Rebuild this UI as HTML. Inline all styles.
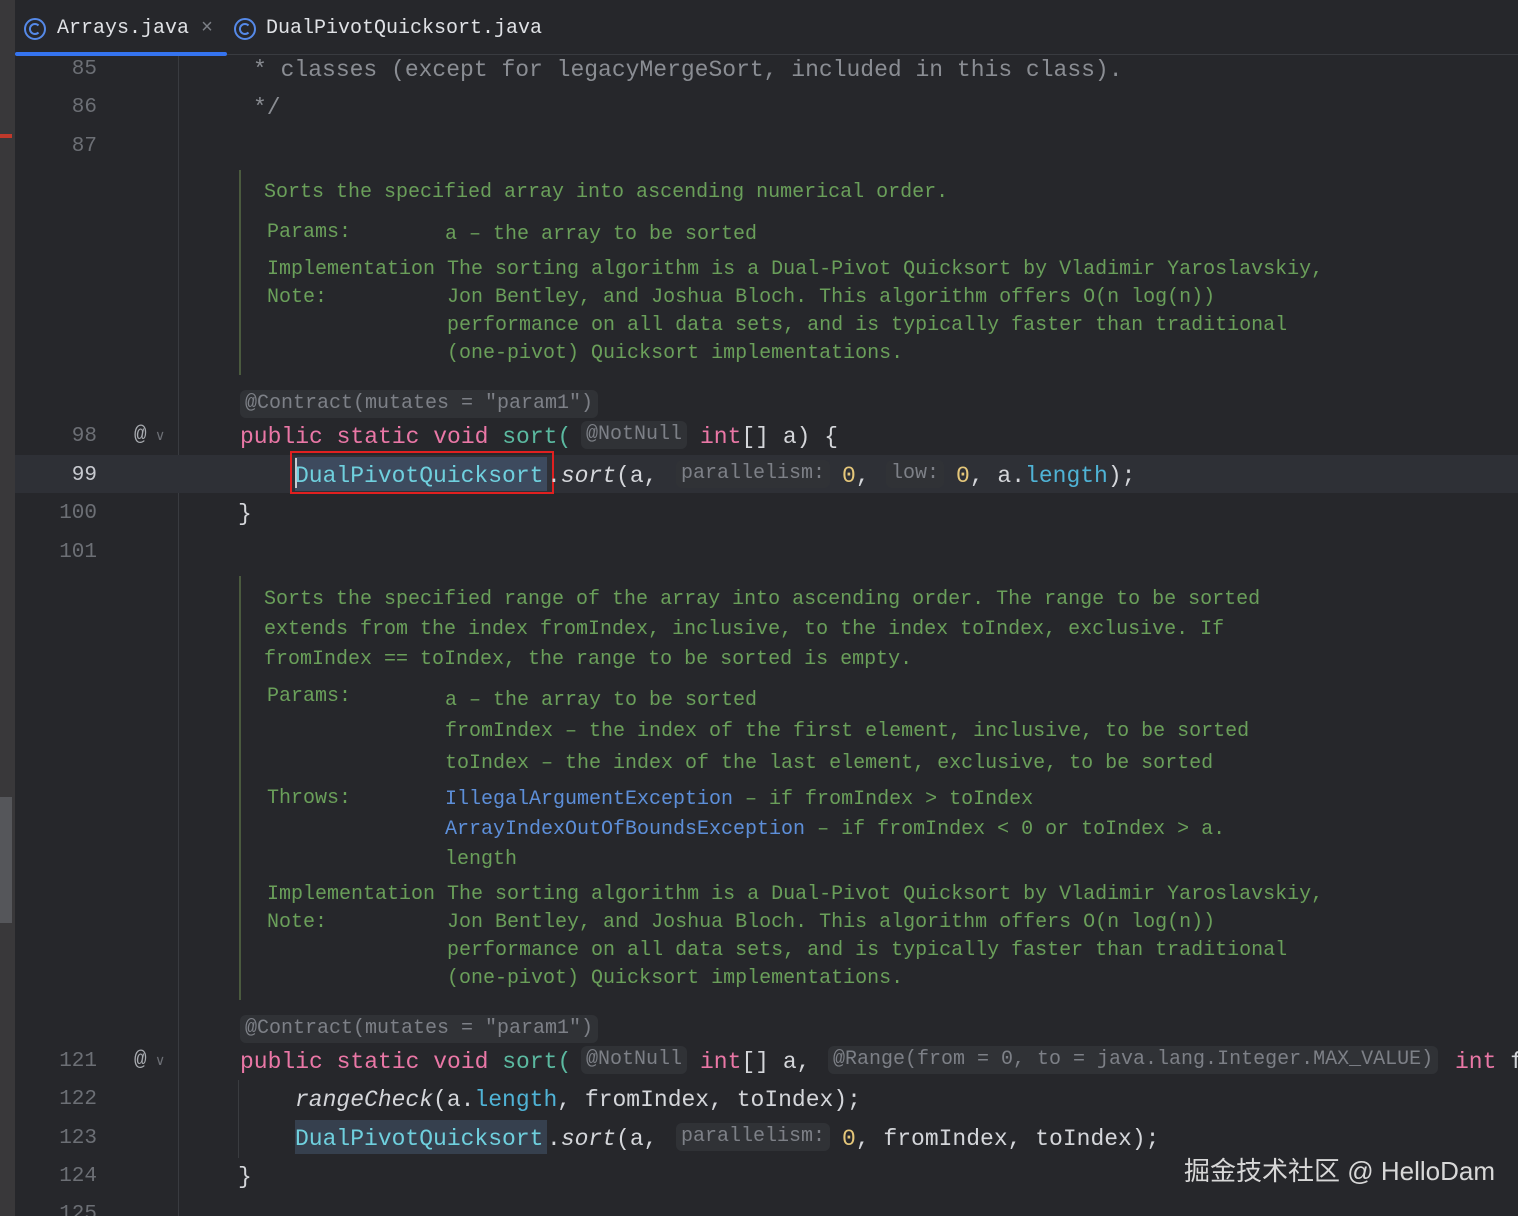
<!DOCTYPE html>
<html><head><meta charset="utf-8"><style>
*{margin:0;padding:0;box-sizing:border-box}
html,body{width:1518px;height:1216px;overflow:hidden}
body{background:#26272b;position:relative;font-family:"Liberation Mono",monospace;color:#d4d6da}
.a{position:absolute;white-space:pre}
.c{font-size:23px;line-height:38px;height:38px;transform:translateY(2px)}
.d{font-size:20px;line-height:28px;color:#6a9f5a;transform:translateY(2px)}
.n{font-size:21px;line-height:38px;color:#6c6f75;width:80px;text-align:right;transform:translateY(2px)}
.h{font-size:20px;line-height:28px;color:#7d8087;background:#303236;border-radius:6px;padding:0 5px}
.k{color:#ea77a6}.m{color:#5bb9a0}.cl{color:#6fd0de}.num{color:#e5c77a}.f{color:#4fb3d6}.l{color:#5d8fd9}.g{color:#8a8d93}
</style></head><body>
<div class="a" style="left:0;top:0;width:15px;height:1216px;background:#39383a"></div>
<div class="a" style="left:0;top:134px;width:12px;height:4px;background:#c0392b"></div>
<div class="a" style="left:0;top:797px;width:12px;height:126px;background:#55565a"></div>
<div class="a" style="left:15px;top:0;width:1503px;height:55px;background:#26272b;border-bottom:1px solid #393b40"></div>
<div class="a" style="left:15px;top:52px;width:212px;height:4px;background:#3574f0;border-radius:2px"></div>
<div class="a" style="left:178px;top:56px;width:1px;height:1160px;background:#393b40"></div>
<svg class="a" style="left:23px;top:17px" width="24" height="24"><circle cx="12" cy="12" r="10" fill="none" stroke="#5589e8" stroke-width="2"/><path d="M15.5 8.5a5 5 0 1 0 0 7" fill="none" stroke="#5589e8" stroke-width="2"/></svg>
<div class="a" style="left:57px;top:15px;font-size:20px;line-height:28px;color:#dfe1e5">Arrays.java <span style="color:#7d8087">×</span></div>
<svg class="a" style="left:233px;top:17px" width="24" height="24"><circle cx="12" cy="12" r="10" fill="none" stroke="#5589e8" stroke-width="2"/><path d="M15.5 8.5a5 5 0 1 0 0 7" fill="none" stroke="#5589e8" stroke-width="2"/></svg>
<div class="a" style="left:266px;top:15px;font-size:20px;line-height:28px;color:#dfe1e5">DualPivotQuicksort.java</div>

<div class="a" style="left:15px;top:455px;width:1503px;height:38px;background:#2e3036"></div>

<div class="a n" style="left:17px;top:49px">85</div>
<div class="a n" style="left:17px;top:87px">86</div>
<div class="a n" style="left:17px;top:126px">87</div>
<div class="a n" style="left:17px;top:416px">98</div>
<div class="a n" style="left:17px;top:455px;color:#c8cad0">99</div>
<div class="a n" style="left:17px;top:493px">100</div>
<div class="a n" style="left:17px;top:532px">101</div>
<div class="a n" style="left:17px;top:1041px">121</div>
<div class="a n" style="left:17px;top:1079px">122</div>
<div class="a n" style="left:17px;top:1118px">123</div>
<div class="a n" style="left:17px;top:1156px">124</div>
<div class="a n" style="left:17px;top:1194px">125</div>
<div class="a" style="left:134px;top:421px;font-size:21px;line-height:30px;color:#a8abb0">@<span style="font-size:14px;color:#6c6f75"> ∨</span></div>
<div class="a" style="left:134px;top:1046px;font-size:21px;line-height:30px;color:#a8abb0">@<span style="font-size:14px;color:#6c6f75"> ∨</span></div>

<div class="a c g" style="left:253px;top:49px">* classes (except for legacyMergeSort, included in this class).</div>
<div class="a c g" style="left:253px;top:87px">*/</div>

<div class="a" style="left:239px;top:170px;width:2px;height:205px;background:#4a5a3e"></div>
<div class="a d" style="left:264px;top:177px">Sorts the specified array into ascending numerical order.</div>
<div class="a d" style="left:267px;top:217px">Params:</div>
<div class="a d" style="left:445px;top:219px">a – the array to be sorted</div>
<div class="a d" style="left:267px;top:254px">Implementation The sorting algorithm is a Dual-Pivot Quicksort by Vladimir Yaroslavskiy,
Note:          Jon Bentley, and Joshua Bloch. This algorithm offers O(n log(n))
               performance on all data sets, and is typically faster than traditional
               (one-pivot) Quicksort implementations.</div>

<div class="a h" style="left:240px;top:390px">@Contract(mutates = "param1")</div>
<div class="a c" style="left:240px;top:416px"><span class="k">public static void </span><span class="m">sort(</span></div>
<div class="a h" style="left:581px;top:421px">@NotNull</div>
<div class="a c" style="left:700px;top:416px"><span class="k">int</span>[] a) {</div>

<div class="a" style="left:295px;top:457px;width:252px;height:34px;background:#3d4a5e"></div>
<div class="a" style="left:290px;top:451px;width:264px;height:43px;border:2px solid #e02020"></div>
<div class="a" style="left:295px;top:458px;width:2px;height:30px;background:#c8cad0"></div>
<div class="a c cl" style="left:295px;top:455px">DualPivotQuicksort</div>
<div class="a c" style="left:547px;top:455px">.<i>sort</i>(a,</div>
<div class="a h" style="left:676px;top:460px">parallelism:</div>
<div class="a c" style="left:842px;top:455px"><span class="num">0</span>,</div>
<div class="a h" style="left:886px;top:460px">low:</div>
<div class="a c" style="left:956px;top:455px"><span class="num">0</span>, a.<span class="f">length</span>);</div>
<div class="a c" style="left:238px;top:493px">}</div>

<div class="a" style="left:239px;top:576px;width:2px;height:424px;background:#4a5a3e"></div>
<div class="a d" style="left:264px;top:583px;line-height:30px">Sorts the specified range of the array into ascending order. The range to be sorted
extends from the index fromIndex, inclusive, to the index toIndex, exclusive. If
fromIndex == toIndex, the range to be sorted is empty.</div>
<div class="a d" style="left:267px;top:681px">Params:</div>
<div class="a d" style="left:445px;top:685px">a – the array to be sorted</div>
<div class="a d" style="left:445px;top:714px;font-size:20px;line-height:32px">fromIndex – the index of the first element, inclusive, to be sorted
toIndex – the index of the last element, exclusive, to be sorted</div>
<div class="a d" style="left:267px;top:783px">Throws:</div>
<div class="a d" style="left:445px;top:783px;line-height:30px"><span class="l">IllegalArgumentException</span> – if fromIndex &gt; toIndex
<span class="l">ArrayIndexOutOfBoundsException</span> – if fromIndex &lt; 0 or toIndex &gt; a.
length</div>
<div class="a d" style="left:267px;top:879px">Implementation The sorting algorithm is a Dual-Pivot Quicksort by Vladimir Yaroslavskiy,
Note:          Jon Bentley, and Joshua Bloch. This algorithm offers O(n log(n))
               performance on all data sets, and is typically faster than traditional
               (one-pivot) Quicksort implementations.</div>

<div class="a h" style="left:240px;top:1015px">@Contract(mutates = "param1")</div>
<div class="a c" style="left:240px;top:1041px"><span class="k">public static void </span><span class="m">sort(</span></div>
<div class="a h" style="left:581px;top:1046px">@NotNull</div>
<div class="a c" style="left:700px;top:1041px"><span class="k">int</span>[] a,</div>
<div class="a h" style="left:828px;top:1046px">@Range(from = 0, to = java.lang.Integer.MAX_VALUE)</div>
<div class="a c" style="left:1455px;top:1041px"><span class="k">int</span> f</div>
<div class="a" style="left:238px;top:1080px;width:1px;height:78px;background:#3a3c40"></div>
<div class="a c" style="left:295px;top:1079px"><i>rangeCheck</i>(a.<span class="f">length</span>, fromIndex, toIndex);</div>
<div class="a" style="left:295px;top:1120px;width:252px;height:34px;background:#36404e"></div>
<div class="a c cl" style="left:295px;top:1118px">DualPivotQuicksort</div>
<div class="a c" style="left:547px;top:1118px">.<i>sort</i>(a,</div>
<div class="a h" style="left:676px;top:1123px">parallelism:</div>
<div class="a c" style="left:842px;top:1118px"><span class="num">0</span>, fromIndex, toIndex);</div>
<div class="a c" style="left:238px;top:1156px">}</div>

<div class="a" style="left:1184px;top:1154px;font-family:'Liberation Sans','Noto Sans CJK SC',sans-serif;font-size:26px;line-height:34px;color:#d8d8d8">掘金技术社区 @ HelloDam</div>
</body></html>
